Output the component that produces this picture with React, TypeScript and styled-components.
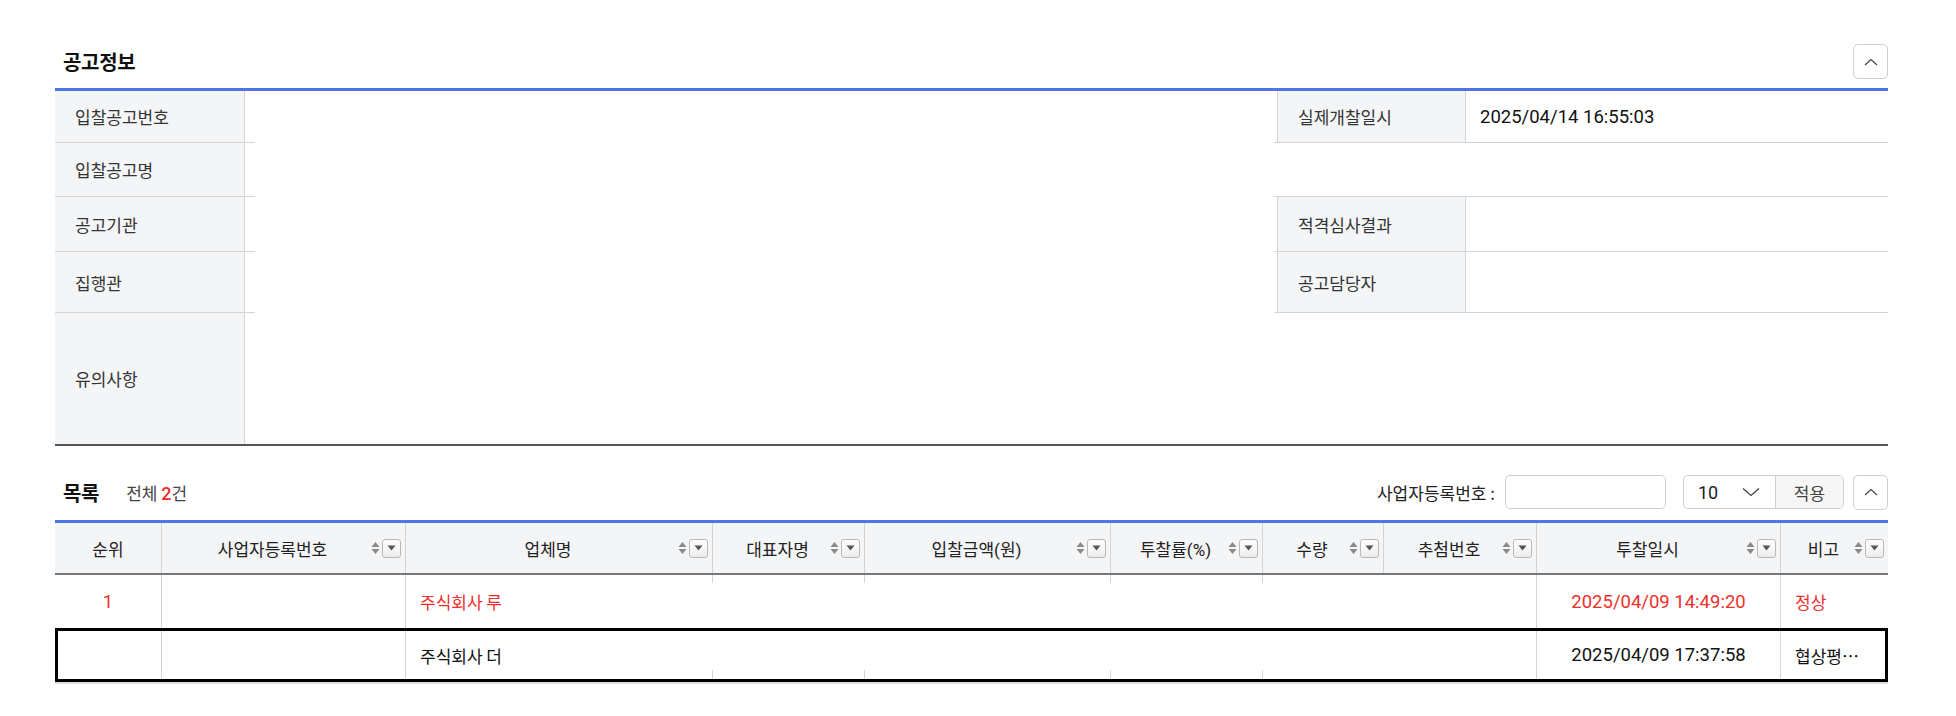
import React from 'react';
import styled, { createGlobalStyle } from 'styled-components';

const GlobalStyle = createGlobalStyle`
    html, body {
        margin: 0;
        padding: 0;
        background: #fff;
    }
    body {
        font-family: Roboto, "Noto Sans CJK KR", sans-serif;
        color: #222;
    }
    * {
        box-sizing: border-box;
    }
`;

const KO = `"Noto Sans CJK KR", sans-serif`;
const NUM = `Roboto, "Noto Sans CJK KR", sans-serif`;
const LINE = '#d4d4d4';
const BLUE = '#4f74e4';
const RED = '#ee2f2a';

const Page = styled.div`
    padding: 44px 68px 30px 55px;
`;

const SectionHead = styled.div`
    display: flex;
    align-items: center;
    justify-content: space-between;
    height: 35px;
    margin-bottom: 9px;
`;

const Title = styled.h2`
    margin: 0;
    padding-left: 8px;
    font-family: ${KO};
    font-size: 20px;
    font-weight: 700;
    color: #111;
    letter-spacing: -0.3px;
`;

const IconButton = styled.button`
    width: 35px;
    height: 35px;
    padding: 0;
    border: 1px solid #cfcfcf;
    border-radius: 5px;
    background: #fff;
    display: flex;
    align-items: center;
    justify-content: center;
`;

const ChevronUp = () => (
    <svg width="14" height="8" viewBox="0 0 14 8">
        <polyline points="1,7 7,1.5 13,7" fill="none" stroke="#444" strokeWidth="1.2" />
    </svg>
);

/* ---- 공고정보 ---- */

const InfoGrid = styled.div`
    display: grid;
    grid-template-columns: 190px 1fr 189px 422px;
    grid-template-rows: 52px 54px 55px 61px 131px;
    border-top: 3px solid ${BLUE};
    border-bottom: 2px solid #555;
`;

const LeftLabel = styled.div<{ $row: number; $last?: boolean }>`
    grid-column: 1;
    grid-row: ${p => p.$row};
    display: flex;
    align-items: center;
    padding-left: 20px;
    background: #f4f5f7;
    border-right: 1px solid ${LINE};
    border-bottom: ${p => (p.$last ? 'none' : `1px solid ${LINE}`)};
    font-family: ${KO};
    font-size: 17px;
    color: #333;
`;

/* the row lines run a little past the label columns into the empty middle */
const Blank = styled.div<{ $row: number }>`
    grid-column: 2;
    grid-row: ${p => p.$row};
    background:
        linear-gradient(${LINE}, ${LINE}) left bottom / 10px 1px no-repeat,
        linear-gradient(${LINE}, ${LINE}) right bottom / 3px 1px no-repeat;
`;

const RightLabel = styled.div<{ $row: number }>`
    grid-column: 3;
    grid-row: ${p => p.$row};
    display: flex;
    align-items: center;
    padding-left: 20px;
    background: #f4f5f7;
    border-left: 1px solid ${LINE};
    border-right: 1px solid ${LINE};
    border-bottom: 1px solid ${LINE};
    font-family: ${KO};
    font-size: 17px;
    color: #333;
`;

const RightValue = styled.div<{ $row: number }>`
    grid-column: 4;
    grid-row: ${p => p.$row};
    display: flex;
    align-items: center;
    padding-left: 14px;
    border-bottom: 1px solid ${LINE};
    font-family: ${NUM};
    font-size: 18.5px;
    color: #111;
`;

const RightGap = styled.div<{ $row: number }>`
    grid-column: 3 / span 2;
    grid-row: ${p => p.$row};
    border-bottom: 1px solid ${LINE};
`;

/* ---- 목록 ---- */

const ListBar = styled.div`
    display: flex;
    align-items: center;
    height: 34px;
    margin-top: 29px;
    margin-bottom: 11px;
`;

const Count = styled.span`
    margin-left: 27px;
    font-family: ${KO};
    font-size: 17px;
    color: #444;
    b {
        color: ${RED};
        font-family: ${NUM};
        font-weight: 500;
        font-size: 18px;
    }
`;

const Spacer = styled.div`
    flex: 1;
`;

const FieldLabel = styled.label`
    font-family: ${KO};
    font-size: 17px;
    color: #222;
    margin-right: 10px;
`;

const SearchInput = styled.input`
    width: 161px;
    height: 34px;
    border: 1px solid #cfcfcf;
    border-radius: 5px;
    outline: none;
    margin-right: 17px;
`;

const PageGroup = styled.div`
    display: flex;
    height: 34px;
    border: 1px solid #cfcfcf;
    border-radius: 5px;
    overflow: hidden;
    margin-right: 9px;
`;

const SizeSelect = styled.div`
    width: 92px;
    display: flex;
    align-items: center;
    justify-content: space-between;
    padding: 0 15px 0 14px;
    border-right: 1px solid #cfcfcf;
    font-family: ${NUM};
    font-size: 18px;
    color: #222;
`;

const ApplyButton = styled.button`
    width: 67px;
    border: none;
    background: #f6f6f6;
    font-family: ${KO};
    font-size: 17px;
    color: #444;
    padding: 0;
`;

const ChevronDown = () => (
    <svg width="18" height="10" viewBox="0 0 18 10">
        <polyline points="1,1.5 9,8.5 17,1.5" fill="none" stroke="#444" strokeWidth="1.3" />
    </svg>
);

const COLS = '107px 244px 307px 152px 246px 152px 121px 153px 244px 1fr';

const Table = styled.div`
    border-top: 3px solid ${BLUE};
    border-bottom: 2px solid #dedede;
`;

const HeadRow = styled.div`
    display: grid;
    grid-template-columns: ${COLS};
    height: 52px;
    background: #f4f5f7;
    border-bottom: 2px solid #777;
`;

const HeadCell = styled.div<{ $plain?: boolean; $last?: boolean }>`
    display: flex;
    align-items: center;
    padding: ${p => (p.$plain ? '0' : '0 4px 0 12px')};
    border-right: ${p => (p.$last ? 'none' : `1px solid ${LINE}`)};
    font-family: ${NUM};
    font-size: 17px;
    color: #222;
`;

const HeadText = styled.span`
    flex: 1;
    text-align: center;
`;

const HeadTools = styled.span`
    display: flex;
    align-items: center;
    gap: 2px;
`;

const FilterBox = styled.span`
    width: 19px;
    height: 19px;
    border: 1px solid #b9b9b9;
    border-radius: 3px;
    background: linear-gradient(#ffffff, #ececec);
    display: flex;
    align-items: center;
    justify-content: center;
`;

const SortIcon = () => (
    <svg width="9" height="14" viewBox="0 0 9 14">
        <polygon points="4.5,1 8.5,6 0.5,6" fill="#8a8a8a" />
        <polygon points="0.5,8 8.5,8 4.5,13" fill="#8a8a8a" />
    </svg>
);

const FilterIcon = () => (
    <FilterBox>
        <svg width="9" height="6" viewBox="0 0 9 6">
            <polygon points="0.5,0.5 8.5,0.5 4.5,5.5" fill="#555" />
        </svg>
    </FilterBox>
);

type Line = 'full' | 'stub' | 'none';

const BodyRow = styled.div<{ $selected?: boolean }>`
    display: grid;
    grid-template-columns: ${COLS};
    height: ${p => (p.$selected ? '54px' : '53px')};
    outline: ${p => (p.$selected ? '3px solid #000' : 'none')};
    outline-offset: -3px;
`;

const BodyCell = styled.div<{ $line: Line; $stubAt: 'top' | 'bottom'; $align?: string; $red?: boolean; $num?: boolean }>`
    display: flex;
    align-items: center;
    justify-content: ${p => p.$align || 'flex-start'};
    padding: 0 14px;
    min-width: 0;
    white-space: nowrap;
    border-right: ${p => (p.$line === 'full' ? `1px solid ${LINE}` : 'none')};
    background: ${p =>
        p.$line === 'stub'
            ? `linear-gradient(${LINE}, ${LINE}) right ${p.$stubAt} / 1px ${p.$stubAt === 'top' ? '8px' : '12px'} no-repeat`
            : 'none'};
    font-family: ${p => (p.$num ? NUM : KO)};
    font-size: ${p => (p.$num ? '18.5px' : '17px')};
    color: ${p => (p.$red ? RED : '#111')};
`;

const headers: { label: string; tools: boolean }[] = [
    { label: '순위', tools: false },
    { label: '사업자등록번호', tools: true },
    { label: '업체명', tools: true },
    { label: '대표자명', tools: true },
    { label: '입찰금액(원)', tools: true },
    { label: '투찰률(%)', tools: true },
    { label: '수량', tools: true },
    { label: '추첨번호', tools: true },
    { label: '투찰일시', tools: true },
    { label: '비고', tools: true },
];

const lines: Line[] = ['full', 'full', 'stub', 'stub', 'stub', 'stub', 'none', 'full', 'full', 'none'];

type Bid = { rank: string; name: string; date: string; note: string; red: boolean; selected: boolean };

const bids: Bid[] = [
    { rank: '1', name: '주식회사 루', date: '2025/04/09 14:49:20', note: '정상', red: true, selected: false },
    { rank: '', name: '주식회사 더', date: '2025/04/09 17:37:58', note: '협상평…', red: false, selected: true },
];

export default function App() {
    return (
        <>
            <GlobalStyle />
            <Page>
                <SectionHead>
                    <Title>공고정보</Title>
                    <IconButton aria-label="접기">
                        <ChevronUp />
                    </IconButton>
                </SectionHead>

                <InfoGrid>
                    <LeftLabel $row={1}>입찰공고번호</LeftLabel>
                    <LeftLabel $row={2}>입찰공고명</LeftLabel>
                    <LeftLabel $row={3}>공고기관</LeftLabel>
                    <LeftLabel $row={4}>집행관</LeftLabel>
                    <LeftLabel $row={5} $last>유의사항</LeftLabel>
                    {[1, 2, 3, 4].map(r => (
                        <Blank key={r} $row={r} />
                    ))}
                    <RightLabel $row={1}>실제개찰일시</RightLabel>
                    <RightValue $row={1}>2025/04/14 16:55:03</RightValue>
                    <RightGap $row={2} />
                    <RightLabel $row={3}>적격심사결과</RightLabel>
                    <RightValue $row={3} />
                    <RightLabel $row={4}>공고담당자</RightLabel>
                    <RightValue $row={4} />
                </InfoGrid>

                <ListBar>
                    <Title>목록</Title>
                    <Count>
                        전체 <b>2</b>건
                    </Count>
                    <Spacer />
                    <FieldLabel>사업자등록번호 :</FieldLabel>
                    <SearchInput />
                    <PageGroup>
                        <SizeSelect>
                            10
                            <ChevronDown />
                        </SizeSelect>
                        <ApplyButton>적용</ApplyButton>
                    </PageGroup>
                    <IconButton aria-label="접기">
                        <ChevronUp />
                    </IconButton>
                </ListBar>

                <Table>
                    <HeadRow>
                        {headers.map((h, i) => (
                            <HeadCell key={h.label} $plain={!h.tools} $last={i === headers.length - 1}>
                                <HeadText>{h.label}</HeadText>
                                {h.tools && (
                                    <HeadTools>
                                        <SortIcon />
                                        <FilterIcon />
                                    </HeadTools>
                                )}
                            </HeadCell>
                        ))}
                    </HeadRow>
                    {bids.map((b, r) => {
                        const stubAt = r === 0 ? 'top' : 'bottom';
                        return (
                            <BodyRow key={b.name} $selected={b.selected}>
                                <BodyCell $line={lines[0]} $stubAt={stubAt} $align="center" $red={b.red} $num>
                                    {b.rank}
                                </BodyCell>
                                <BodyCell $line={lines[1]} $stubAt={stubAt} />
                                <BodyCell $line={lines[2]} $stubAt={stubAt} $red={b.red}>
                                    {b.name}
                                </BodyCell>
                                <BodyCell $line={lines[3]} $stubAt={stubAt} />
                                <BodyCell $line={lines[4]} $stubAt={stubAt} />
                                <BodyCell $line={lines[5]} $stubAt={stubAt} />
                                <BodyCell $line={lines[6]} $stubAt={stubAt} />
                                <BodyCell $line={lines[7]} $stubAt={stubAt} />
                                <BodyCell $line={lines[8]} $stubAt={stubAt} $align="center" $red={b.red} $num>
                                    {b.date}
                                </BodyCell>
                                <BodyCell $line={lines[9]} $stubAt={stubAt} $red={b.red}>
                                    {b.note}
                                </BodyCell>
                            </BodyRow>
                        );
                    })}
                </Table>
            </Page>
        </>
    );
}
